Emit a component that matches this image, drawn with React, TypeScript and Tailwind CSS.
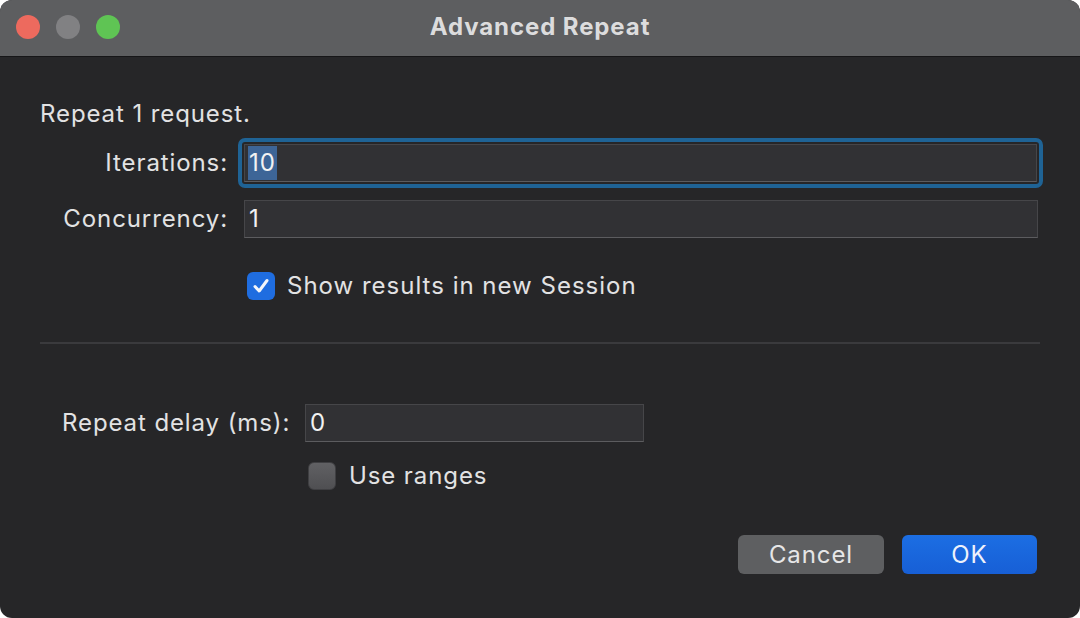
import React from "react";

const font = { fontFamily: "Inter, 'Noto Sans', 'Liberation Sans', sans-serif" };

function Field({ value, selected, width }: { value: string; selected?: boolean; width: string }) {
  return (
    <div className={`${width} h-[38px] bg-[#313134] border border-[#464649] border-b-[#5c5c5f] flex items-center pl-[3px] text-[24px] text-[#f2f2f2]`}>
      {selected ? <span className="bg-[#3d6597] px-[1px] leading-[34px]">{value}</span> : <span className="px-[1px]">{value}</span>}
    </div>
  );
}

export default function App() {
  return (
    <div className="w-[1080px] h-[618px] bg-white" style={font}>
      <div className="w-full h-full rounded-[12px] overflow-hidden bg-[#262628] flex flex-col">
        <div className="h-[57px] bg-[#5d5e60] border-b border-[#161618] relative flex items-center justify-center shrink-0">
          <div className="absolute left-[16px] top-[15px] flex gap-[16px]">
            <div className="w-[24px] h-[24px] rounded-full bg-[#ed6a5e]" />
            <div className="w-[24px] h-[24px] rounded-full bg-[#818183]" />
            <div className="w-[24px] h-[24px] rounded-full bg-[#5fc454]" />
          </div>
          <div className="text-[24px] leading-[28px] font-bold text-[#dcdcdd] tracking-[0.9px] mt-[-2px]">Advanced Repeat</div>
        </div>

        <div className="flex flex-col text-[24px] leading-[28px] tracking-[0.9px] text-[#e2e2e3] whitespace-nowrap">
          <div className="pl-[40px] mt-[43px]">Repeat 1 request.</div>

          <div className="flex items-center mt-[16px]">
            <div className="w-[228px] text-right">Iterations:</div>
            <div className="ml-[10px] rounded-[7px] border-[4px] border-[#1f6395] p-[2px] -my-[6px]">
              <Field value="10" selected width="w-[793px]" />
            </div>
          </div>

          <div className="flex items-center mt-[18px]">
            <div className="w-[228px] text-right">Concurrency:</div>
            <div className="ml-[16px]">
              <Field value="1" width="w-[794px]" />
            </div>
          </div>

          <div className="flex items-center mt-[34px] pl-[247px] h-[28px]">
            <div className="w-[28px] h-[28px] rounded-[6px] bg-[#1f6de0] flex items-center justify-center">
              <svg width="20" height="20" viewBox="0 0 20 20">
                <path d="M4 10.5 L8.2 15 L16 4.5" fill="none" stroke="#f4f6fa" strokeWidth="3" strokeLinecap="round" strokeLinejoin="round" />
              </svg>
            </div>
            <div className="ml-[12px] tracking-[1px]">Show results in new Session</div>
          </div>

          <div className="mx-[40px] mt-[42px] h-[2px] bg-[#3a3a3d] w-[1000px]" />

          <div className="flex items-center mt-[60px] pl-[62px]">
            <div className="w-[228px] shrink-0">Repeat delay (ms):</div>
            <div className="ml-[15px]">
              <Field value="0" width="w-[339px]" />
            </div>
          </div>

          <div className="flex items-center mt-[20px] pl-[308px] h-[28px]">
            <div className="w-[28px] h-[28px] rounded-[6px] bg-gradient-to-b from-[#616164] to-[#4f4f52] border border-[#3f3f42]" />
            <div className="ml-[13px]">Use ranges</div>
          </div>

          <div className="flex justify-end gap-[18px] pr-[43px] mt-[45px]">
            <div className="w-[146px] h-[39px] rounded-[6px] bg-[#5e5f61] flex items-center justify-center text-[#e6e6e7]">Cancel</div>
            <div className="w-[135px] h-[39px] rounded-[6px] bg-gradient-to-b from-[#1c6ee3] to-[#175fd6] flex items-center justify-center text-[#eef2fb]">OK</div>
          </div>
        </div>
      </div>
    </div>
  );
}
